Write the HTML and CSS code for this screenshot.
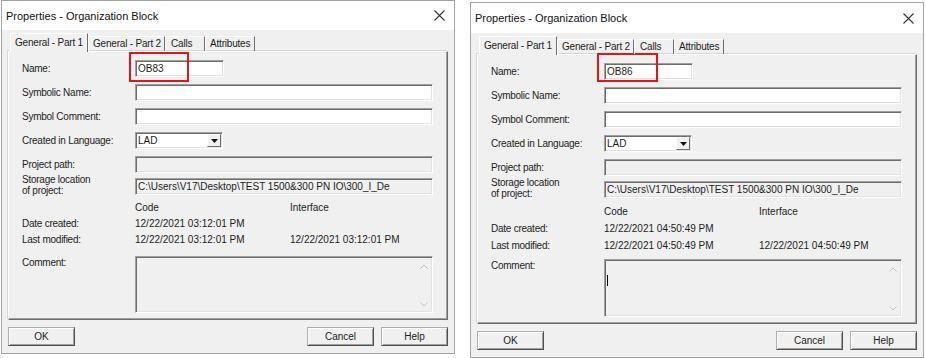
FILE: index.html
```html
<!DOCTYPE html>
<html lang="en">
<head>
    <meta charset="UTF-8">
    <title>Properties - Organization Block</title>
    <link rel="stylesheet" href="styles.css">
</head>
<body>
    <div class="screen">
        <!-- left dialog: OB83 -->
        <div class="dialog">
            <div class="titlebar">
                <span class="title">Properties - Organization Block</span>
                <svg class="close" width="11" height="11" viewBox="0 0 11 11"><path d="M0.5 0.5L10.5 10.5M10.5 0.5L0.5 10.5" stroke="#333" stroke-width="1.1" fill="none"/></svg>
            </div>
            <div class="body">
                <div class="tabs">
                    <div class="tab active tab-gen1">General - Part 1</div>
                    <div class="tab tab-gen2">General - Part 2</div>
                    <div class="tab tab-calls">Calls</div>
                    <div class="tab tab-attr">Attributes</div>
                </div>
                <div class="panel">
                    <div class="row">
                        <div class="label">Name:</div>
                        <div class="name-wrap">
                            <div class="field name-field">OB83</div>
                            <span class="mark"></span>
                        </div>
                    </div>
                    <div class="row">
                        <div class="label">Symbolic Name:</div>
                        <div class="field wide"></div>
                    </div>
                    <div class="row">
                        <div class="label">Symbol Comment:</div>
                        <div class="field wide"></div>
                    </div>
                    <div class="row">
                        <div class="label">Created in Language:</div>
                        <div class="field select">
                            <span>LAD</span>
                            <span class="drop"><svg width="7" height="4" viewBox="0 0 7 4"><path d="M0 0H7L3.5 4Z" fill="#111"/></svg></span>
                        </div>
                    </div>
                    <div class="row row-tight">
                        <div class="label">Project path:</div>
                        <div class="field wide disabled"></div>
                    </div>
                    <div class="row row-tight">
                        <div class="label two-line">Storage location<br>of project:</div>
                        <div class="field wide disabled">C:\Users\V17\Desktop\TEST 1500&amp;300 PN IO\300_I_De</div>
                    </div>
                    <div class="info">
                        <div></div><div>Code</div><div>Interface</div>
                        <div class="label">Date created:</div><div>12/22/2021 03:12:01 PM</div><div></div>
                        <div class="label">Last modified:</div><div>12/22/2021 03:12:01 PM</div><div>12/22/2021 03:12:01 PM</div>
                    </div>
                    <div class="comment-row">
                        <div class="label">Comment:</div>
                        <div class="field comment disabled">
                            <div class="comment-text"></div>
                            <div class="scroll">
                                <svg width="8" height="5" viewBox="0 0 8 5"><path d="M0.5 4.5L4 1L7.5 4.5" stroke="#c4c4c4" fill="none"/></svg>
                                <svg width="8" height="5" viewBox="0 0 8 5"><path d="M0.5 0.5L4 4L7.5 0.5" stroke="#c4c4c4" fill="none"/></svg>
                            </div>
                        </div>
                    </div>
                </div>
                <div class="buttons">
                    <div class="btn">OK</div>
                    <div class="btn-group">
                        <div class="btn">Cancel</div>
                        <div class="btn">Help</div>
                    </div>
                </div>
            </div>
        </div>

        <!-- right dialog: OB86 -->
        <div class="dialog dialog-b">
            <div class="titlebar">
                <span class="title">Properties - Organization Block</span>
                <svg class="close" width="11" height="11" viewBox="0 0 11 11"><path d="M0.5 0.5L10.5 10.5M10.5 0.5L0.5 10.5" stroke="#333" stroke-width="1.1" fill="none"/></svg>
            </div>
            <div class="body">
                <div class="tabs">
                    <div class="tab active tab-gen1">General - Part 1</div>
                    <div class="tab tab-gen2">General - Part 2</div>
                    <div class="tab tab-calls">Calls</div>
                    <div class="tab tab-attr">Attributes</div>
                </div>
                <div class="panel">
                    <div class="row">
                        <div class="label">Name:</div>
                        <div class="name-wrap">
                            <div class="field name-field">OB86</div>
                            <span class="mark"></span>
                        </div>
                    </div>
                    <div class="row">
                        <div class="label">Symbolic Name:</div>
                        <div class="field wide"></div>
                    </div>
                    <div class="row">
                        <div class="label">Symbol Comment:</div>
                        <div class="field wide"></div>
                    </div>
                    <div class="row">
                        <div class="label">Created in Language:</div>
                        <div class="field select">
                            <span>LAD</span>
                            <span class="drop"><svg width="7" height="4" viewBox="0 0 7 4"><path d="M0 0H7L3.5 4Z" fill="#111"/></svg></span>
                        </div>
                    </div>
                    <div class="row row-tight">
                        <div class="label">Project path:</div>
                        <div class="field wide disabled"></div>
                    </div>
                    <div class="row row-tight">
                        <div class="label two-line">Storage location<br>of project:</div>
                        <div class="field wide disabled">C:\Users\V17\Desktop\TEST 1500&amp;300 PN IO\300_I_De</div>
                    </div>
                    <div class="info">
                        <div></div><div>Code</div><div>Interface</div>
                        <div class="label">Date created:</div><div>12/22/2021 04:50:49 PM</div><div></div>
                        <div class="label">Last modified:</div><div>12/22/2021 04:50:49 PM</div><div>12/22/2021 04:50:49 PM</div>
                    </div>
                    <div class="comment-row">
                        <div class="label">Comment:</div>
                        <div class="field comment disabled">
                            <div class="comment-text"><span class="caret"></span></div>
                            <div class="scroll">
                                <svg width="8" height="5" viewBox="0 0 8 5"><path d="M0.5 4.5L4 1L7.5 4.5" stroke="#c4c4c4" fill="none"/></svg>
                                <svg width="8" height="5" viewBox="0 0 8 5"><path d="M0.5 0.5L4 4L7.5 0.5" stroke="#c4c4c4" fill="none"/></svg>
                            </div>
                        </div>
                    </div>
                </div>
                <div class="buttons">
                    <div class="btn">OK</div>
                    <div class="btn-group">
                        <div class="btn">Cancel</div>
                        <div class="btn">Help</div>
                    </div>
                </div>
            </div>
        </div>
    </div>
</body>
</html>
```

FILE: styles.css
```css
body {
    margin: 0;
    background-color: #fff;
    color: #1c1c1c;
    font-family: "Liberation Sans", Arial, sans-serif;
    font-size: 10px;
}

.screen {
    display: flex;
    align-items: flex-start;
    gap: 15px;
    padding-left: 1px;
}

/* window */
.dialog {
    width: 454px;
    height: 354px;
    box-sizing: border-box;
    border: 1px solid #a3a3a3;
    background-color: #f0f0f0;
    display: flex;
    flex-direction: column;
}

.dialog-b {
    margin-top: 2px;
    height: 356px;
}

.titlebar {
    height: 29px;
    flex: none;
    background-color: #fff;
    display: flex;
    align-items: center;
    justify-content: space-between;
    padding: 0 9px 0 4px;
}

.dialog-b .titlebar {
    height: 30px;
}

.title {
    font-size: 11px;
    color: #111;
}

.body {
    flex: 1;
    display: flex;
    flex-direction: column;
    padding: 3px 6px 7px 6px;
}

/* tabs */
.tabs {
    display: flex;
    align-items: flex-end;
    height: 18px;
    padding-left: 2px;
    position: relative;
    z-index: 1;
}

.tab {
    height: 15px;
    box-sizing: border-box;
    padding-left: 4px;
    line-height: 14px;
    border: 1px solid;
    border-color: #fff #6d6d6d transparent #fff;
    border-bottom: 0;
    letter-spacing: -0.2px;
    white-space: nowrap;
}

.tab.active {
    height: 19px;
    margin-bottom: -1px;
    line-height: 17px;
    background-color: #f0f0f0;
}

.tab-gen1 { width: 78px; }
.tab-gen2 { width: 77px; }
.tab-calls { width: 40px; padding-left: 5px; }
.tab-attr { width: 50px; }

.panel {
    flex: 1;
    border: 1px solid;
    border-color: #fff #6d6d6d #6d6d6d #fff;
    box-shadow: inset -1px -1px #a0a0a0, -1px -1px #d8d8d8;
    padding: 8px 13px 0 13px;
}

/* rows */
.row {
    display: flex;
    align-items: center;
    height: 17px;
    margin-bottom: 7px;
}

.row-tight {
    margin-bottom: 5px;
}

.label {
    width: 113px;
    flex: none;
    letter-spacing: -0.25px;
}

.two-line {
    line-height: 11px;
    margin-top: -4px;
}

.field {
    height: 17px;
    box-sizing: border-box;
    background-color: #fff;
    border: 1px solid;
    border-color: #a0a0a0 #fff #fff #a0a0a0;
    box-shadow: inset 1px 1px #6d6d6d, inset -1px -1px #e3e3e3;
    padding-left: 2px;
    line-height: 15px;
    white-space: nowrap;
    overflow: hidden;
}

.field.disabled {
    background-color: #f0f0f0;
}

.wide {
    width: 298px;
}

.name-wrap {
    position: relative;
}

.name-field {
    width: 89px;
}

.mark {
    position: absolute;
    left: -6px;
    top: -8px;
    width: 60px;
    height: 30px;
    box-sizing: border-box;
    border: 2px solid #e3151b;
}

.dialog-b .mark {
    left: -7px;
    top: -10px;
    width: 61px;
    height: 29px;
}

.select {
    width: 88px;
    display: flex;
    align-items: center;
    justify-content: space-between;
    padding-right: 1px;
}

.drop {
    width: 14px;
    height: 13px;
    box-sizing: border-box;
    background-color: #f0f0f0;
    border: 1px solid;
    border-color: #fff #6d6d6d #6d6d6d #fff;
    display: flex;
    align-items: center;
    justify-content: center;
}

/* dates */
.info {
    display: grid;
    grid-template-columns: 113px 155px auto;
    line-height: 16px;
}

.dialog-b .info {
    margin-top: 1px;
    line-height: 17px;
}

.comment-row {
    display: flex;
    margin-top: 8px;
}

.dialog-b .comment-row {
    margin-top: 5px;
}

.comment-row .label {
    line-height: 13px;
}

.comment {
    width: 298px;
    height: 57px;
    display: flex;
    justify-content: space-between;
}

.dialog-b .comment {
    height: 58px;
}

.comment-text {
    flex: 1;
    padding-top: 15px;
}

.caret {
    display: block;
    width: 1px;
    height: 11px;
    background-color: #000;
}

.scroll {
    width: 16px;
    display: flex;
    flex-direction: column;
    justify-content: space-between;
    align-items: center;
    padding: 7px 0 5px 0;
}

/* buttons */
.buttons {
    flex: none;
    display: flex;
    justify-content: space-between;
    margin-top: 7px;
}

.btn-group {
    display: flex;
    gap: 7px;
}

.btn {
    width: 67px;
    height: 19px;
    box-sizing: border-box;
    border: 1px solid;
    border-color: #adadad #4f4f4f #4f4f4f #adadad;
    box-shadow: inset 1px 1px #fff, inset -1px -1px #a0a0a0;
    background-color: #f0f0f0;
    text-align: center;
    line-height: 17px;
}
```
